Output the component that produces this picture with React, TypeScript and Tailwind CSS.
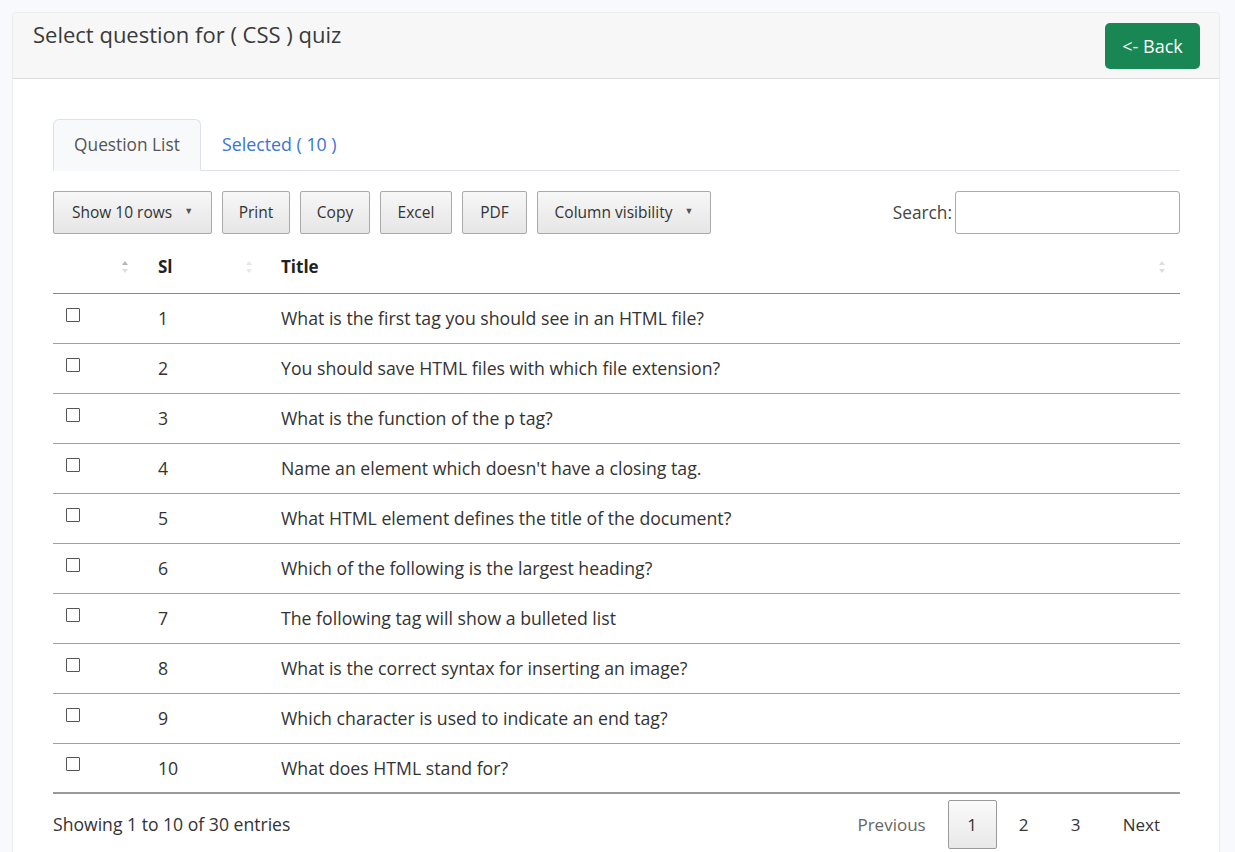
import React from "react";

const rows = [
  "What is the first tag you should see in an HTML file?",
  "You should save HTML files with which file extension?",
  "What is the function of the p tag?",
  "Name an element which doesn't have a closing tag.",
  "What HTML element defines the title of the document?",
  "Which of the following is the largest heading?",
  "The following tag will show a bulleted list",
  "What is the correct syntax for inserting an image?",
  "Which character is used to indicate an end tag?",
  "What does HTML stand for?",
];

function SortIcon({ up = "#c8c8c8", down = "#e2e2e2" }: { up?: string; down?: string }) {
  return (
    <svg width="8" height="14" viewBox="0 0 8 14" className="shrink-0">
      <path d="M4 1 L7 5 L1 5 Z" fill={up} />
      <path d="M4 13 L7 9 L1 9 Z" fill={down} />
    </svg>
  );
}

function Btn({ children, caret = false, w }: { children: React.ReactNode; caret?: boolean; w: string }) {
  return (
    <button
      className={`${w} h-[43px] flex items-center justify-center gap-[12px] rounded-[2px] border border-[#a9a9a9] bg-gradient-to-b from-[#f7f7f7] to-[#e6e6e6] text-[15.5px] text-[#333]`}
    >
      <span>{children}</span>
      {caret && <span className="text-[9px] text-[#555] -mt-[3px]">▼</span>}
    </button>
  );
}

export default function App() {
  return (
    <div
      className="min-h-[852px] w-[1235px] bg-[#f8f9fc] pt-[12px] pl-[12px] text-[#333]"
      style={{ fontFamily: '"Open Sans", "Noto Sans", sans-serif' }}
    >
      <div className="w-[1208px] bg-white border border-[#ececec] rounded-t-[4px] h-[852px] overflow-hidden">
        <div className="h-[66px] bg-[#f7f7f7] border-b border-[#dcdcdc] flex items-start justify-between pl-[20px] pr-[19px]">
          <div className="text-[22px] text-[#3a3a3a] mt-[5px]">Select question for ( CSS ) quiz</div>
          <button className="mt-[10px] w-[95px] h-[46px] rounded-[5px] bg-[#198754] text-white text-[18px]">&lt;- Back</button>
        </div>
        <div className="pl-[40px] pr-[39px] pt-[40px]">
          {/* tabs */}
          <div className="flex border-b border-[#dee2e6] h-[52px]">
            <div className="w-[148px] h-[52px] -mb-px bg-[#f8f9fa] border border-[#dee2e6] border-b-[#f8f9fa] rounded-t-[6px] flex items-center justify-center text-[17.3px] text-[#555]">
              Question List
            </div>
            <div className="px-[21px] flex items-center text-[17.8px] text-[#3b73d9]">Selected ( 10 )</div>
          </div>
          {/* toolbar */}
          <div className="flex items-center mt-[20px]">
            <div className="flex gap-[10px]">
              <Btn w="w-[159px]" caret>Show 10 rows</Btn>
              <Btn w="w-[68px]">Print</Btn>
              <Btn w="w-[70px]">Copy</Btn>
              <Btn w="w-[72px]">Excel</Btn>
              <Btn w="w-[65px]">PDF</Btn>
              <Btn w="w-[174px]" caret>Column visibility</Btn>
            </div>
            <div className="ml-auto flex items-center">
              <span className="text-[17.3px] text-[#444] mr-[3px]">Search:</span>
              <div className="w-[225px] h-[43px] border border-[#aaa] rounded-[3px] bg-white" />
            </div>
          </div>
          {/* table */}
          <div className="mt-[6px]">
            <div className="h-[54px] flex items-center border-b border-[#8a8a8a] text-[17px] font-bold text-[#222]">
              <div className="w-[105px] flex justify-end pr-[29px]">
                <SortIcon up="#b5b5b5" down="#dedede" />
              </div>
              <div className="w-[123px] flex items-center justify-between pr-[28px]">
                <span>Sl</span>
                <SortIcon up="#e6e6e6" down="#e6e6e6" />
              </div>
              <div className="flex-1 flex items-center justify-between pr-[14px]">
                <span>Title</span>
                <SortIcon up="#dcdcdc" down="#dcdcdc" />
              </div>
            </div>
            {rows.map((t, i) => (
              <div
                key={i}
                className={`h-[50px] flex items-center text-[17.7px] text-[#333] ${i === rows.length - 1 ? "border-b-2 border-[#9a9a9a]" : "border-b border-[#a0a0a0]"}`}
              >
                <div className="w-[105px] pl-[13px]">
                  <div className="w-[14px] h-[14px] border-[1.5px] border-[#555] rounded-[1px] -mt-[8px] bg-white" />
                </div>
                <div className="w-[123px]">{i + 1}</div>
                <div className="flex-1">{t}</div>
              </div>
            ))}
          </div>
          {/* footer */}
          <div className="flex items-center mt-[6px]">
            <span className="text-[17.6px] text-[#333]">Showing 1 to 10 of 30 entries</span>
            <div className="ml-auto flex items-center text-[17px]">
              <span className="text-[#666] mr-[22px]">Previous</span>
              <div className="w-[49px] h-[49px] border border-[#9a9a9a] rounded-[2px] bg-gradient-to-b from-[#fafafa] to-[#e8e8e8] flex items-center justify-center text-[#333]">1</div>
              <span className="w-[54px] text-center text-[#333]">2</span>
              <span className="w-[50px] text-center text-[#333]">3</span>
              <span className="ml-[22px] mr-[20px] text-[#333]">Next</span>
            </div>
          </div>
        </div>
      </div>
    </div>
  );
}
